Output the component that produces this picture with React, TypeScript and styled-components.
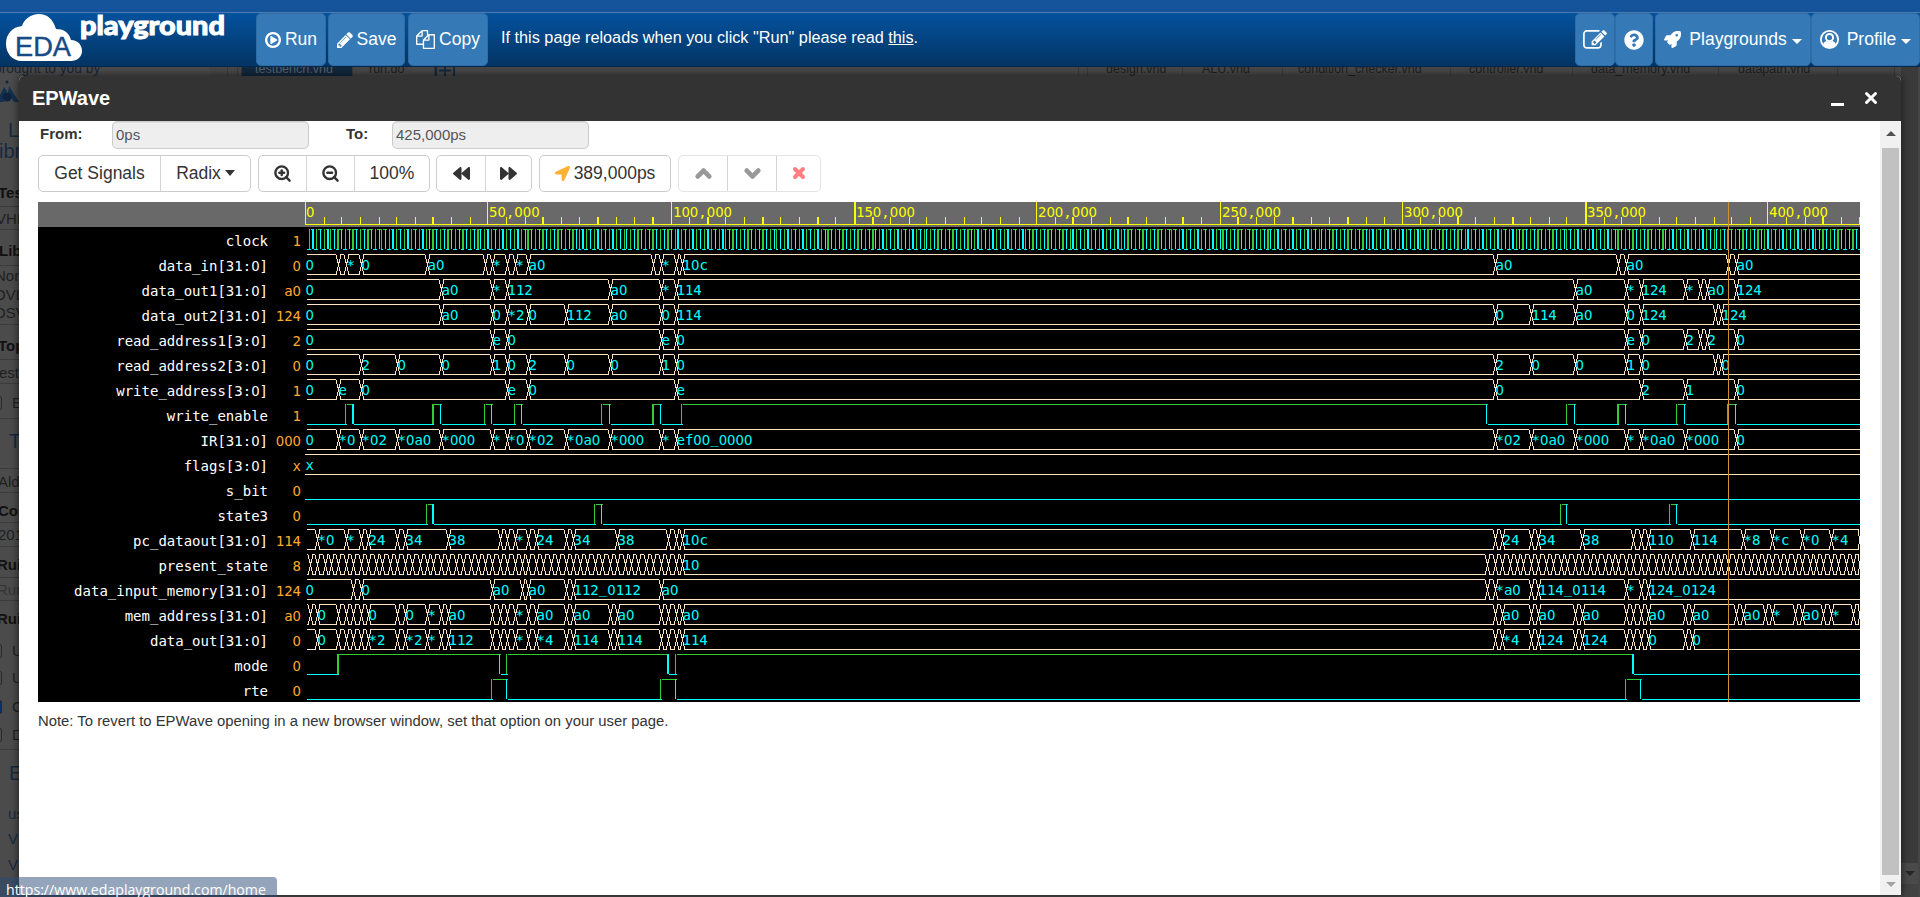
import React from 'react';
import styled, { createGlobalStyle, css } from 'styled-components';
import {
  FaQuestionCircle,
  FaRocket,
  FaLocationArrow,
  FaBackward,
  FaForward,
} from 'react-icons/fa';
import { ZoomIn, ZoomOut, ChevronUp, ChevronDown, X } from 'lucide-react';

const Global = createGlobalStyle`
  * { box-sizing: border-box; }
  body {
    margin: 0;
    background: #4b4b4b;
    font-family: "Liberation Sans", Arial, sans-serif;
    overflow: hidden;
  }
`;

const Page = styled.div`
  position: relative;
  height: 897px;
  overflow: hidden;
  display: flex;
  flex-direction: column;
`;

/* ---------- top navigation ---------- */

const TopStrip = styled.div`
  height: 13px;
  flex: none;
  background: #15539b;
  border-bottom: 1px solid #4b7ab3;
`;

const NavBar = styled.header`
  height: 54px;
  flex: none;
  display: flex;
  align-items: stretch;
  background: linear-gradient(#04529e, #033463);
  border-bottom: 1px solid #022850;
  color: #fff;
`;

const LogoBox = styled.div`
  width: 256px;
  flex: none;
  svg { display: block; }
`;

const NavButton = styled.button<{ $w: number; $gap?: number }>`
  width: ${p => p.$w}px;
  margin-right: ${p => p.$gap ?? 0}px;
  padding: 0;
  flex: none;
  display: flex;
  align-items: center;
  justify-content: center;
  gap: ${p => (p.$w > 100 ? 8 : 4)}px;
  border: 1px solid #2e6da4;
  border-radius: 5px;
  background: #357ab7;
  color: #fff;
  font: 17.5px "Liberation Sans", Arial, sans-serif;
  white-space: nowrap;
  svg { flex: none; display: block; }
`;

const NavMessage = styled.p`
  margin: 0;
  padding: 15px 0 0 13px;
  flex: 1;
  font-size: 16.25px;
  line-height: 19px;
  white-space: nowrap;
  a { color: #fff; text-decoration: underline; }
`;

const Caret = styled.span`
  border-top: 5px solid currentColor;
  border-left: 5px solid transparent;
  border-right: 5px solid transparent;
  margin: 3px 0 0 -3px;
`;

const ToolCaret = styled.span`
  border-top: 6px solid currentColor;
  border-left: 5.5px solid transparent;
  border-right: 5.5px solid transparent;
`;

/* ---------- dimmed page behind the dialog ---------- */

const Backdrop = styled.div`
  flex: 1;
  min-height: 0;
  display: flex;
  background: #4b4b4b;
`;

const Sidebar = styled.aside`
  width: 209px;
  flex: none;
  overflow: hidden;
  color: #1f1f1f;
`;

const Credit = styled.div`
  height: 9px;
  margin-left: -6px;
  overflow: hidden;
  font-size: 13.75px;
  line-height: 4px;
  color: #1b2536;
  white-space: nowrap;
`;

const SideList = styled.div`
  width: 19px;
  overflow: hidden;
`;

const SideRow = styled.div<{ $h: number; $x: number; $kind: string }>`
  height: ${p => p.$h}px;
  margin-left: ${p => p.$x}px;
  display: flex;
  align-items: flex-end;
  gap: 10px;
  font-size: 15px;
  line-height: 1;
  white-space: nowrap;
  ${p => p.$kind === 'rule' && css`border-bottom: 1px solid #3b3b3b;`}
  ${p => p.$kind === 'bold' && css`font-weight: bold; color: #111;`}
  ${p => p.$kind === 'head' && css`font-size: 20px; color: #162a40;`}
  ${p => p.$kind === 'link' && css`color: #162a40;`}
  ${p => p.$kind === 'faint' && css`color: #343434;`}
`;

const SideCheck = styled.span<{ $on: boolean }>`
  width: 5px;
  height: 14px;
  flex: none;
  margin-left: -3px;
  border: 1px solid #2a2a2a;
  border-radius: 2px;
  background: ${p => (p.$on ? '#06316b' : 'transparent')};
`;

const TabStrip = styled.div`
  flex: 1;
  height: 9px;
  display: flex;
  overflow: hidden;
  font-size: 12.5px;
  line-height: 4px;
  color: #222;
  background: #474747;
`;

const Tab = styled.div<{ $w: number; $pad: number; $active?: boolean }>`
  width: ${p => p.$w}px;
  padding-left: ${p => p.$pad}px;
  flex: none;
  white-space: nowrap;
  border-right: 1px solid #3a3a3a;
  background: ${p => (p.$active ? '#12283d' : 'transparent')};
  color: ${p => (p.$active ? '#56616d' : '#202020')};
`;

const AddTab = styled.div`
  width: 20px;
  flex: none;
  display: flex;
  justify-content: center;
  border: solid #14293d;
  border-width: 0 2px;
  svg { display: block; }
`;

const OuterScroll = styled.div`
  width: 19px;
  flex: none;
  display: flex;
  flex-direction: column;
  align-items: center;
  border-right: 2px solid #454545;
  background: linear-gradient(#3a3a3a 796px, #4a4a4a 796px, #4a4a4a 817px, #424242 817px);
  justify-content: flex-end;
  padding-bottom: 21px;
`;

const Arrow = styled.span<{ $dir: 'up' | 'down'; $color: string }>`
  border-left: 5px solid transparent;
  border-right: 5px solid transparent;
  ${p => (p.$dir === 'up'
    ? css`border-bottom: 5px solid ${p.$color};`
    : css`border-top: 5px solid ${p.$color};`)}
`;

/* ---------- dialog ---------- */

const Dialog = styled.section`
  position: absolute;
  left: 19px;
  top: 76px;
  width: 1882px;
  height: 819px;
  display: flex;
  flex-direction: column;
  background: #fff;
  box-shadow: 0 0 8px rgba(0, 0, 0, 0.65);
  border-radius: 5px 5px 0 0;
`;

const DialogHead = styled.div`
  height: 45px;
  flex: none;
  padding: 0 21px 1px 13px;
  display: flex;
  align-items: center;
  background: #333;
  border-radius: 5px 5px 0 0;
  color: #fff;
`;

const DialogTitle = styled.h1`
  margin: 0;
  flex: 1;
  font-size: 20px;
`;

const Minimize = styled.span`
  width: 13px;
  height: 3px;
  margin: 12px 18px 0 0;
  background: #fff;
`;

const DialogBody = styled.div`
  flex: 1;
  min-height: 0;
  display: flex;
`;

const Content = styled.div`
  flex: 1;
  padding-left: 19px;
  color: #333;
`;

const ScrollTrack = styled.div`
  width: 21px;
  padding: 10px 0 8px;
  display: flex;
  flex-direction: column;
  align-items: center;
  background: #f1f1f1;
`;

const ScrollThumb = styled.div`
  width: 17px;
  flex: 1;
  margin: 12px 0 7px;
  background: #c1c1c1;
`;

const RangeRow = styled.div`
  height: 28px;
  display: flex;
  font-size: 15px;
`;

const RangeLabel = styled.label<{ $w: number }>`
  width: ${p => p.$w}px;
  padding: 4px 0 0 2px;
  font-weight: bold;
`;

const RangeField = styled.div<{ $gap?: number }>`
  width: 197px;
  height: 28px;
  margin-right: ${p => p.$gap ?? 0}px;
  padding: 4px 3px;
  border: 1px solid #ccc;
  border-radius: 5px;
  background: #eee;
  box-shadow: inset 0 1px 1px rgba(0, 0, 0, 0.075);
  color: #555;
`;

const Toolbar = styled.div`
  display: flex;
  margin-top: 6px;
  height: 37px;
`;

const Group = styled.div<{ $gap: number; $off?: boolean }>`
  display: flex;
  margin-right: ${p => p.$gap}px;
  border: 1px solid ${p => (p.$off ? '#e4e4e4' : '#ccc')};
  border-radius: 5px;
`;

const ToolButton = styled.button<{ $w: number; $color?: string }>`
  width: ${p => p.$w}px;
  padding: 0 0 1px;
  display: flex;
  align-items: center;
  justify-content: center;
  gap: 4px;
  border: 0;
  background: transparent;
  color: ${p => p.$color ?? '#333'};
  font: 17.5px "Liberation Sans", Arial, sans-serif;
  & + & { border-left: 1px solid #d4d4d4; }
  svg { flex: none; }
`;

const Note = styled.p`
  margin: 11px 0 0;
  font-size: 14.85px;
  line-height: 17px;
`;

const StatusTip = styled.div`
  position: absolute;
  left: 0;
  bottom: 0;
  width: 277px;
  height: 20px;
  padding: 3px 0 0 6px;
  border-top-right-radius: 4px;
  background: rgba(41, 75, 119, 0.5);
  color: #fff;
  font: 14.15px/20px "Open Sans", "Noto Sans", sans-serif;
  white-space: nowrap;
`;

/* ---------- waveform viewer ---------- */

const Viewer = styled.div`
  position: relative;
  width: 1822px;
  margin-top: 10px;
  background: #000;
`;

const mono = css`
  font-family: "DejaVu Sans Mono", monospace;
  font-size: 14px;
`;

const Ruler = styled.div`
  height: 25px;
  padding-left: 267px;
  background: #696969;
  svg { display: block; }
`;

const SignalRow = styled.div`
  ${mono}
  height: 25px;
  display: flex;
  line-height: 29px;
  svg { display: block; flex: none; }
`;

const SignalName = styled.div`
  width: 230px;
  text-align: right;
  color: #fff;
`;

const SignalValue = styled.div`
  width: 33px;
  margin-right: 4px;
  text-align: right;
  color: #ffa92c;
`;

const OpenZero = styled.span`
  font-family: "DejaVu Sans", sans-serif;
  font-size: 13.25px;
`;

const WaveText = styled.text`
  ${mono}
  fill: #00ffff;
`;

const RulerText = styled.text`
  ${mono}
  fill: #ffff00;
`;

const ZeroSpan = styled.tspan`
  font-family: "DejaVu Sans", sans-serif;
  font-size: 13.25px;
`;

const Cursor = styled.div`
  position: absolute;
  left: 1690px;
  top: 0;
  bottom: 0;
  width: 1px;
  background: #cf9030;
`;

const withZeros = (text: string, Zero: React.ElementType) =>
  text.split(/(0+)/).map((part, i) => (part[0] === '0' ? <Zero key={i}>{part}</Zero> : part));

/* Wave labels also lift the underscore clear of the bus outline. */
const waveLabel = (text: string) =>
  text.split(/(0+|_)/).map((part, i) => {
    if (part === '_') return <tspan key={i} baselineShift="2">_</tspan>;
    return part[0] === '0' ? <ZeroSpan key={i}>{part}</ZeroSpan> : part;
  });

const END = 425;
const WIDTH = 1555;
const ORIGIN = 244;

/* Snaps a time to the viewer's 1.25x pixel grid: left edge and stroke width. */
const snap = (t: number): [number, number] => {
  const n = Math.round(ORIGIN + (t * WIDTH) / END / 1.25 - t * 0.001);
  const left = Math.ceil(n * 1.25 - 0.5);
  const right = Math.ceil((n + 1) * 1.25 - 0.5);
  return [left - 305, right - left];
};

const BitWave = ({ edges, start = 2 }: { edges: number[]; start?: number }) => {
  const parts: React.ReactNode[] = [];
  let high = false;
  let from = start;
  edges.forEach((t, i) => {
    const [x, w] = snap(t);
    parts.push(
      <rect key={`h${i}`} x={from} y={high ? 2 : 22} width={Math.max(1, x + 2 - from)} height={1} fill={high ? '#32cd32' : '#00ffff'} />,
      <rect key={`v${i}`} x={x} y={2} width={w} height={20} fill={high ? '#00ffff' : '#32cd32'} />,
    );
    high = !high;
    from = x + 2;
  });
  parts.push(
    <rect key="last" x={from} y={high ? 2 : 22} width={Math.max(0, WIDTH - from)} height={1} fill={high ? '#32cd32' : '#00ffff'} />,
  );
  return <svg width={WIDTH} height={25} shapeRendering="crispEdges">{parts}</svg>;
};

type Change = [number, string?];

const BusWave = ({ first, changes, start = 2 }: { first?: string; changes: Change[]; start?: number }) => {
  let d = '';
  let from = start;
  changes.forEach(([t]) => {
    const c = snap(t)[0];
    d += `M${from} 2.5H${c - 1}M${from} 22.5H${c - 1}`;
    if (t < END) {
      d += `M${c - 0.5} 2.5V6.5M${c + 3.5} 2.5V6.5M${c + 0.5} 6.5V10.5M${c + 2.5} 6.5V10.5M${c + 1.5} 10V15`;
      d += `M${c + 0.5} 14.5V18.5M${c + 2.5} 14.5V18.5M${c - 0.5} 18.5V22.5M${c + 3.5} 18.5V22.5`;
    } else {
      d += `M${c - 1.5} 2.5V8.5M${c - 0.5} 8.5V16.5M${c - 1.5} 16.5V22.5`;
    }
    from = c + 3;
  });
  d += `M${from} 2.5H${WIDTH}M${from} 22.5H${WIDTH}`;
  return (
    <svg width={WIDTH} height={25}>
      <path d={d} stroke="#ffe4c4" fill="none" shapeRendering="crispEdges" />
      {first && <WaveText x={0.5} y={18}>{waveLabel(first)}</WaveText>}
      {changes.map(([t, s]) => s && (
        <WaveText key={t} x={snap(t)[0] + 1.5} y={18}>{waveLabel(s)}</WaveText>
      ))}
    </svg>
  );
};

const steps = (a: number, b: number, by: number) => {
  const out: number[] = [];
  for (let t = a; t <= b; t += by) out.push(t);
  return out;
};

/* "9 11:* 15:0" -> transitions at 9, 11 and 15 with their labels */
const bus = (s: string): Change[] =>
  s.split(' ').map(p => {
    const [t, label] = p.split(':');
    return [Number(t), label];
  });

type Signal = { name: string; value: string; bits?: number[]; first?: string; changes?: Change[]; start?: number };

const SIGNALS: Signal[] = [
  { name: 'clock', value: '1', bits: steps(1, 424, 1) },
  { name: 'data_in[31:0]', value: '0', first: '0', changes: bus('9 11:* 15:0 33:a0 49 51:* 55 57:* 61:a0 95 97:* 101 103:10c 325:a0 359 361:a0 389 391:a0') },
  { name: 'data_out1[31:0]', value: 'a0', first: '0', changes: bus('37:a0 51:* 55:112 83:a0 97:* 101:114 347:a0 361:* 365:124 377:* 381 383:a0 391:124') },
  { name: 'data_out2[31:0]', value: '124', first: '0', changes: bus('37:a0 51:0 55:*2 61:0 71:112 83:a0 97:0 101:114 325:0 335:114 347:a0 361:0 365:124 385 387:124') },
  { name: 'read_address1[3:0]', value: '2', first: '0', changes: bus('51:e 55:0 97:e 101:0 361:e 365:0 377:2 381 383:2 391:0') },
  { name: 'read_address2[3:0]', value: '0', first: '0', changes: bus('15:2 25:0 37:0 51:1 55:0 61:2 71:0 83:0 97:1 101:0 325:2 335:0 347:0 361:1 365:0 385 387:0') },
  { name: 'write_address[3:0]', value: '1', first: '0', changes: bus('9:e 15:0 55:e 61:0 101:e 325:0 365:2 377:1 391:0') },
  { name: 'write_enable', value: '1', bits: [11, 13, 35, 37, 49, 51, 57, 59, 81, 83, 95, 97, 103, 323, 345, 347, 359, 361, 375, 377, 389, 391] },
  { name: 'IR[31:0]', value: '000', first: '0', changes: bus('9:*0 15:*02 25:*0a0 37:*000 51:* 55:*0 61:*02 71:*0a0 83:*000 97:* 101:ef00_0000 325:*02 335:*0a0 347:*000 361:* 365:*0a0 377:*000 391:0') },
  { name: 'flags[3:0]', value: 'x', first: 'x', changes: [], start: 0 },
  { name: 's_bit', value: '0', bits: [], start: 0 },
  { name: 'state3', value: '0', bits: [33, 35, 79, 81, 343, 345, 373, 375] },
  { name: 'pc_dataout[31:0]', value: '114', changes: bus('3:*0 11:* 15 17:24 25 27:34 39:38 53 55 57:* 61 63:24 71 73:34 85:38 99 101 103:10c 325 327:24 335 337:34 349:38 363 365 367:110 379:114 393:*8 401:*c 409:*0 417:*4 425') },
  { name: 'present_state', value: '8', changes: [...steps(1, 101, 2).map((t): Change => [t]), [103, '10'], ...steps(323, 425, 2).map((t): Change => [t])] },
  { name: 'data_input_memory[31:0]', value: '124', first: '0', changes: bus('13 15:0 51:a0 59 61:a0 71 73:112_0112 97:a0 323 325:*a0 335 337:114_0114 361:* 365 367:124_0124') },
  { name: 'mem_address[31:0]', value: 'a0', changes: bus('1 3:0 9 11 13 15 17:0 25 27:0 33:* 37 39:a0 51 53 55 57:* 61 63:a0 71 73:a0 83 85:a0 97 99 101 103:a0 325 327:a0 335 337:a0 347 349:a0 361 363 365 367:a0 377 379:a0 391 393:a0 399 401:* 407 409:a0 415 417:* 423 425') },
  { name: 'data_out[31:0]', value: '0', changes: bus('3:0 9 11 13 15 17:*2 25 27:*2 33:* 37 39:112 51 53 55 57:* 61 63:*4 71 73:114 83 85:114 97 99 101 103:114 325 327:*4 335 337:124 347 349:124 361 363 365 367:0 377 379:0') },
  { name: 'mode', value: '0', bits: [9, 53, 55, 99, 101, 363] },
  { name: 'rte', value: '0', bits: [51, 55, 97, 101, 361, 365] },
];

const RulerScale = () => (
  <svg width={WIDTH} height={25}>
    {steps(0, 400, 50).map(t => (
      <RulerText key={t} x={snap(t)[0] + (t ? 2 : 1)} y={15}>
        {withZeros(t ? `${t},000` : '0', ZeroSpan)}
      </RulerText>
    ))}
    <g fill="#ffff00" shapeRendering="crispEdges">
      <rect x={0} y={22} width={WIDTH} height={1} />
      {steps(0, END, 5).map(t => {
        const [x, w] = snap(t);
        const major = t % 50 === 0;
        return (
          <rect
            key={t}
            x={Math.min(x, WIDTH - 1)}
            y={major ? 0 : 15}
            width={major ? (t % 200 === 150 ? 2 : 1) : w}
            height={major ? 22 : 7}
          />
        );
      })}
    </g>
  </svg>
);

/* ---------- icons ---------- */

const Glyph = ({ box, w, h, d }: { box: string; w: number; h: number; d: string }) => (
  <svg width={w} height={h} viewBox={box} fill="currentColor"><path d={d} /></svg>
);

const PLAY = 'M1184 768q0 37-32 55l-544 320q-15 9-32 9-16 0-32-8-32-19-32-56v-640q0-37 32-56 33-18 64 1l544 320q32 18 32 55zm128 0q0-148-73-273t-198-198-273-73-273 73-198 198-73 273 73 273 198 198 273 73 273-73 198-198 73-273zm224 0q0 209-103 385.5t-279.5 279.5-385.5 103-385.5-103-279.5-279.5-103-385.5 103-385.5 279.5-279.5 385.5-103 385.5 103 279.5 279.5 103 385.5z';
const PENCIL = 'M363 1536l91-91-235-235-91 91v107h128v128h107zm523-928q0-22-22-22-10 0-17 7l-542 542q-7 7-7 17 0 22 22 22 10 0 17-7l542-542q7-7 7-17zm-54-192l416 416-832 832h-416v-416zm683 96q0 53-37 90l-166 166-416-416 166-165q36-38 90-38 53 0 91 38l235 234q37 39 37 91z';
const FILES = 'M1696 384q40 0 68 28t28 68v1216q0 40-28 68t-68 28h-960q-40 0-68-28t-28-68v-288h-544q-40 0-68-28t-28-68v-672q0-40 20-88t48-76l408-408q28-28 76-48t88-20h416q40 0 68 28t28 68v328q68-40 128-40h416zm-544 213l-299 299h299v-299zm-640-384l-299 299h299v-299zm196 647l316-316v-416h-384v416q0 40-28 68t-68 28h-416v640h512v-256q0-40 20-88t48-76zm956 804v-1152h-384v416q0 40-28 68t-68 28h-416v640h896z';
const EDIT = 'M888 1184l116-116-152-152-116 116v56h96v96h56zm440-720q-16-16-33 1l-350 350q-17 17-1 33t33-1l350-350q17-17 1-33zm80 594v190q0 119-84.5 203.5t-203.5 84.5h-832q-119 0-203.5-84.5t-84.5-203.5v-832q0-119 84.5-203.5t203.5-84.5h832q63 0 117 25 15 7 18 23 3 17-9 29l-49 49q-14 14-32 8-23-6-45-6h-832q-66 0-113 47t-47 113v832q0 66 47 113t113 47h832q66 0 113-47t47-113v-126q0-13 9-22l64-64q15-15 35-7t20 29zm-96-738l288 288-672 672h-288v-288zm444 132l-92 92-288-288 92-92q28-28 68-28t68 28l152 152q28 28 28 68t-28 68z';

const UserIcon = () => (
  <svg width={19} height={19} viewBox="0 0 19 19">
    <circle cx="9.5" cy="9.5" r="8.6" fill="none" stroke="currentColor" strokeWidth="1.8" />
    <circle cx="9.5" cy="7.6" r="3.6" fill="none" stroke="currentColor" strokeWidth="2" />
    <path d="M2.8 15.2Q3.8 11.6 6.6 11Q9.5 13 12.4 11Q15.2 11.6 16.2 15.2Q13 18 9.5 18T2.8 15.2Z" fill="currentColor" />
  </svg>
);

const Logo = () => (
  <svg width={240} height={53} viewBox="0 13 240 53">
    <path d="M22 61C12 61 6 53 6 44C6 34 12 27 22 26C24 19 31 14 39 14C47 14 53 19 56 29C63 29 69 32 71 40C78 40 82 45 82 51C82 57 77 61 71 61Z" fill="#fff" />
    <text x="15" y="56" fontFamily="Liberation Sans" fontSize="28" fill="#184a86" stroke="#184a86" strokeWidth="0.4" textLength="56" lengthAdjust="spacingAndGlyphs">EDA</text>
    <text x="80" y="35" fontFamily="Lato" fontWeight="900" fontSize="27" fill="#fff" stroke="#fff" strokeWidth="1" textLength="145" lengthAdjust="spacingAndGlyphs">playground</text>
  </svg>
);

type Side = [end: number, kind: string, x: number, text?: string, check?: boolean];
const SIDE: Side[] = [
  [140, 'head', 8, 'L'], [161, 'head', -1, 'ibr'],
  [200, 'bold', -2, 'Tes'], [207, 'rule', 0], [226, 'plain', -4, 'VHI'], [230, 'rule', 0],
  [258, 'bold', -1, 'Lib'], [266, 'rule', 0], [283, 'plain', -5, 'Non'], [302, 'plain', -6, 'OVL'], [320, 'plain', -6, 'OSV'], [325, 'rule', 0],
  [353, 'bold', -2, 'Top'], [360, 'rule', 0], [380, 'plain', -1, 'estb'], [384, 'rule', 0],
  [410, 'plain', 0, 'E', false], [419, 'rule', 0],
  [451, 'head', 9, 'T'], [469, 'rule', 0], [489, 'plain', -2, 'Alde'], [493, 'rule', 0],
  [518, 'bold', -2, 'Cor'], [523, 'rule', 0], [542, 'plain', -2, '201'], [547, 'rule', 0],
  [572, 'bold', -3, 'Rui'], [578, 'rule', 0], [597, 'faint', -3, 'Run'], [601, 'rule', 0],
  [626, 'bold', -3, 'Rui'], [658, 'plain', 0, 'U', false], [685, 'plain', 0, 'U', false],
  [714, 'plain', 0, 'C', true], [742, 'plain', 0, 'D', false], [750, 'rule', 0],
  [783, 'head', 9, 'E'], [821, 'link', 8, 'us'], [846, 'link', 8, 'V'], [872, 'link', 8, 'V'],
];

const TABS: [string, number, number, boolean?][] = [
  ['', 19, 0], ['', 10, 0], ['', 4, 0],
  ['testbench.vhd', 111, 13, true], ['run.do', 82, 16], ['+', 20, 0], ['', 624, 0], ['', 9, 0],
  ['design.vhd', 95, 18], ['ALU.vhd', 100, 19], ['condition_checker.vhd', 168, 15],
  ['controller.vhd', 122, 18], ['data_memory.vhd', 146, 18], ['datapath.vhd', 119, 19], ['', 57, 0],
];

export default function App() {
  return (
    <Page>
      <Global />
      <TopStrip />
      <NavBar>
        <LogoBox><Logo /></LogoBox>
        <NavButton $w={70} $gap={2}><Glyph box="0 0 1536 1536" w={16} h={16} d={PLAY} />Run</NavButton>
        <NavButton $w={77} $gap={3}><Glyph box="0 128 1536 1536" w={16} h={16} d={PENCIL} />Save</NavButton>
        <NavButton $w={80}><Glyph box="0 0 1792 1792" w={19} h={19} d={FILES} />Copy</NavButton>
        <NavMessage>If this page reloads when you click "Run" please read <a>this</a>.</NavMessage>
        <NavButton $w={40}><Glyph box="0 128 1792 1500" w={24} h={20} d={EDIT} /></NavButton>
        <NavButton $w={38} $gap={2}><FaQuestionCircle size={20} /></NavButton>
        <NavButton $w={156}><FaRocket size={17} />Playgrounds<Caret /></NavButton>
        <NavButton $w={109}><UserIcon />Profile<Caret /></NavButton>
      </NavBar>
      <Backdrop>
        <Sidebar>
          <Credit>brought to you by</Credit>
          <svg width="19" height="30" viewBox="0 76 19 30" display="block">
            <path d="M-3 102L4 87L7 91L3 98L4 102Z M9 86L19 102H14L8 93Z" fill="#12304f" />
            <circle cx="7" cy="97" r="4.5" fill="#0d2340" />
            <circle cx="7" cy="82" r="1.5" fill="#0d2340" />
          </svg>
          <SideList>
            {SIDE.map(([end, kind, x, text, check], i) => (
              <SideRow key={end} $h={end - (i ? SIDE[i - 1][0] : 106)} $x={x} $kind={kind}>
                {check !== undefined && <SideCheck $on={check} />}
                {text}
              </SideRow>
            ))}
          </SideList>
        </Sidebar>
        <TabStrip>
          {TABS.map(([name, w, pad, active], i) => (name === '+' ? (
            <AddTab key={i}>
              <svg width="12" height="9" viewBox="0 0 12 9"><path d="M0 3.5H12M6 0V9" stroke="#14293d" strokeWidth="2" /></svg>
            </AddTab>
          ) : (
            <Tab key={i} $w={w} $pad={pad} $active={active}>{name}</Tab>
          )))}
        </TabStrip>
        <OuterScroll><Arrow $dir="down" $color="#262626" /></OuterScroll>
      </Backdrop>

      <Dialog>
        <DialogHead>
          <DialogTitle>EPWave</DialogTitle>
          <Minimize />
          <X size={18} strokeWidth={4} />
        </DialogHead>
        <DialogBody>
          <Content>
            <RangeRow>
              <RangeLabel $w={74}>From:</RangeLabel>
              <RangeField $gap={35}>0ps</RangeField>
              <RangeLabel $w={48}>To:</RangeLabel>
              <RangeField>425,000ps</RangeField>
            </RangeRow>
            <Toolbar>
              <Group $gap={7}>
                <ToolButton $w={121}>Get Signals</ToolButton>
                <ToolButton $w={90}>Radix<ToolCaret /></ToolButton>
              </Group>
              <Group $gap={6}>
                <ToolButton $w={47}><ZoomIn size={19} strokeWidth={3} /></ToolButton>
                <ToolButton $w={48}><ZoomOut size={19} strokeWidth={3} /></ToolButton>
                <ToolButton $w={75}>100%</ToolButton>
              </Group>
              <Group $gap={7}>
                <ToolButton $w={48}><FaBackward size={17} /></ToolButton>
                <ToolButton $w={46}><FaForward size={17} /></ToolButton>
              </Group>
              <Group $gap={7}>
                <ToolButton $w={130}><FaLocationArrow size={15} color="#ffb133" />389,000ps</ToolButton>
              </Group>
              <Group $gap={0} $off>
                <ToolButton $w={48} $color="#999"><ChevronUp size={23} strokeWidth={5} /></ToolButton>
                <ToolButton $w={49} $color="#999"><ChevronDown size={23} strokeWidth={5} /></ToolButton>
                <ToolButton $w={44} $color="#ff8080"><X size={16} strokeWidth={6} /></ToolButton>
              </Group>
            </Toolbar>
            <Viewer>
              <Ruler><RulerScale /></Ruler>
              {SIGNALS.map(s => (
                <SignalRow key={s.name}>
                  <SignalName>{withZeros(s.name, OpenZero)}</SignalName>
                  <SignalValue>{withZeros(s.value, OpenZero)}</SignalValue>
                  {s.bits
                    ? <BitWave edges={s.bits} start={s.start} />
                    : <BusWave first={s.first} changes={s.changes ?? []} start={s.start} />}
                </SignalRow>
              ))}
              <Cursor />
            </Viewer>
            <Note>Note: To revert to EPWave opening in a new browser window, set that option on your user page.</Note>
          </Content>
          <ScrollTrack>
            <Arrow $dir="up" $color="#505050" />
            <ScrollThumb />
            <Arrow $dir="down" $color="#a3a3a3" />
          </ScrollTrack>
        </DialogBody>
      </Dialog>
      <StatusTip>https://www.edaplayground.com/home</StatusTip>
    </Page>
  );
}
